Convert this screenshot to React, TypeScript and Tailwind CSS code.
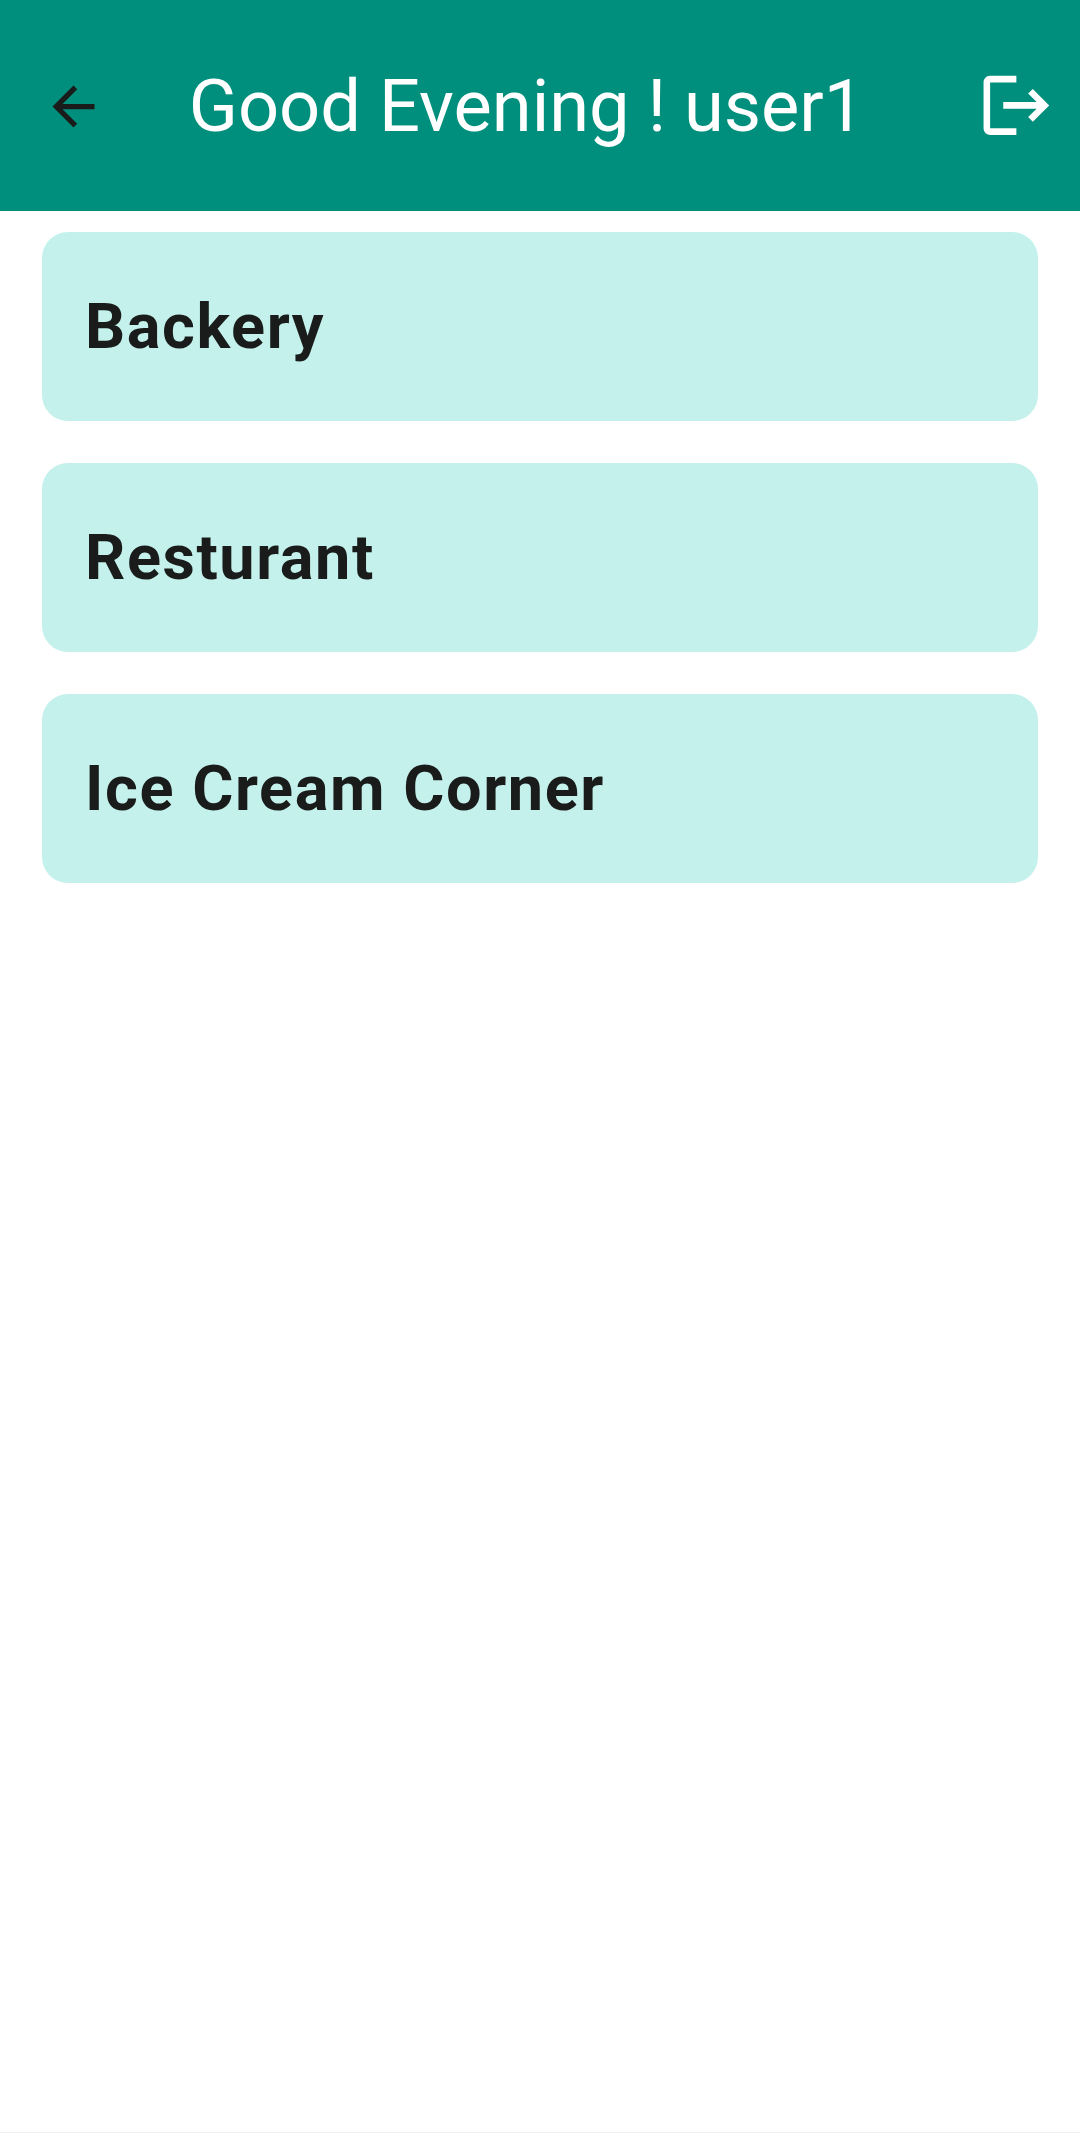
const categories = ["Backery", "Resturant", "Ice Cream Corner"];

function BackIcon() {
  return (
    <svg viewBox="0 0 24 24" fill="currentColor" className="size-[63px] shrink-0 text-[#191c1b]">
      <path d="M20 11H7.83l5.59-5.59L12 4l-8 8 8 8 1.41-1.41L7.83 13H20v-2z" />
    </svg>
  );
}

function LogoutIcon() {
  return (
    <svg viewBox="0 0 24 24" fill="currentColor" className="size-[78.75px] shrink-0 text-white">
      <path d="M17 7l-1.41 1.41L18.17 11H8v2h10.17l-2.58 2.58L17 17l5-5zM4 5h8V3H4c-1.1 0-2 .9-2 2v14c0 1.1.9 2 2 2h8v-2H4V5z" />
    </svg>
  );
}

export default function App() {
  return (
    <div className="flex h-[2133px] w-[1080px] flex-col border-b border-[#f2f2f2] bg-white font-['Roboto',sans-serif]">
      <header className="flex h-[211px] shrink-0 items-center bg-[#008f7c] pt-px pr-[24px] pl-[42px]">
        <button aria-label="Back">
          <BackIcon />
        </button>
        <h1 className="ml-[83.75px] flex-1 pt-px text-[72.2px] leading-[84px] font-normal whitespace-nowrap text-white">
          Good Evening ! user1
        </h1>
        <button aria-label="Log out" className="pb-px">
          <LogoutIcon />
        </button>
      </header>
      <main className="flex flex-col gap-[42px] px-[42px] pt-[21px]">
        {categories.map((name) => (
          <div
            key={name}
            className="flex h-[189px] items-center rounded-[26px] bg-[#c4f1eb] px-[43px] text-[63px] leading-[84px] font-bold tracking-[1.57px] text-[#191c1b]"
          >
            {name}
          </div>
        ))}
      </main>
    </div>
  );
}
